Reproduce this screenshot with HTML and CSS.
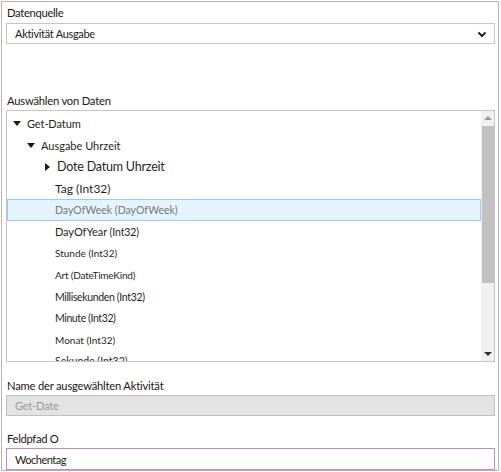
FILE: index.html
```html
<!DOCTYPE html>
<html lang="de">
<head>
<meta charset="utf-8">
<link rel="stylesheet" href="styles.css">
</head>
<body>
<div class="frame">
  <div class="label l1">Datenquelle</div>
  <div class="select">
    <span class="sel-text">Aktivität Ausgabe</span>
    <svg class="chev" width="10" height="7" viewBox="0 0 10 7"><polyline points="1.5,1.5 5,5 8.5,1.5" fill="none" stroke="#222" stroke-width="2"/></svg>
  </div>
  <div class="label l2">Auswählen von Daten</div>
  <div class="tree">
    <div class="list">
      <div class="row lv0"><span class="tri down"></span><span class="t i-get">Get-Datum</span></div>
      <div class="row lv1"><span class="tri down"></span><span class="t i-aus">Ausgabe Uhrzeit</span></div>
      <div class="row lv2"><span class="tri right"></span><span class="t i-dote">Dote Datum Uhrzeit</span></div>
      <div class="row lv3"><span class="t i-tag">Tag (Int32)</span></div>
      <div class="row lv3 sel"><span class="t i-dow">DayOfWeek (DayOfWeek)</span></div>
      <div class="row lv3"><span class="t i-doy">DayOfYear <span class="i-doy2">(Int32)</span></span></div>
      <div class="row lv3"><span class="t i-std">Stunde (Int32)</span></div>
      <div class="row lv3"><span class="t i-art">Art (DateTimeKind)</span></div>
      <div class="row lv3"><span class="t i-ms">Millisekunden (Int32)</span></div>
      <div class="row lv3"><span class="t i-min">Minute (Int32)</span></div>
      <div class="row lv3"><span class="t i-mon">Monat (Int32)</span></div>
      <div class="row lv3"><span class="t i-sek">Sekunde (Int32)</span></div>
    </div>
    <div class="sbar">
      <div class="arrow up"><span></span></div>
      <div class="thumb"></div>
      <div class="track"></div>
      <div class="arrow dn"><span></span></div>
    </div>
  </div>
  <div class="label l3">Name der ausgewählten Aktivität</div>
  <div class="input disabled">Get-Date</div>
  <div class="label l4">Feldpfad O</div>
  <div class="input focus">Wochentag</div>
</div>
</body>
</html>
```
FILE: styles.css
```css
* { box-sizing: border-box; }
html, body { margin: 0; padding: 0; background: #fff; }
body { font-family: Lato, "Noto Sans", sans-serif; color: #1e1e1e; }
.frame {
  margin: 1px;
  width: 498px;
  height: 470px;
  border: 1px solid #b4b4b4;
  padding: 3px 3px 0 4px;
  display: flex;
  flex-direction: column;
}
.label { font-size: 11.2px; line-height: 16px; height: 16px; padding-left: 1px; color: #1b1420; letter-spacing: -0.2px; }
.l1 { margin-top: 0; margin-bottom: 2px; letter-spacing: -0.3px; }
.l2 { margin-top: 49px; margin-bottom: 1px; }
.l3 { margin-top: 16px; margin-bottom: 1px; letter-spacing: -0.2px; }
.l4 { margin-top: 15px; margin-bottom: 1px; letter-spacing: -0.3px; }
.select {
  height: 21px;
  border: 1px solid #c6c6c6;
  display: flex;
  align-items: center;
  justify-content: space-between;
  padding: 0 7px 0 8px;
  font-size: 11px;
  letter-spacing: -0.3px;
  color: #1a1a1a;
}
.chev { display: block; margin-top: 1px; }
.tree {
  height: 252px;
  border: 1px solid #c6c6c6;
  display: flex;
  overflow: hidden;
}
.list { flex: 1; padding-top: 2px; overflow: hidden; }
.row {
  height: 21.6px;
  display: flex;
  align-items: center;
  white-space: nowrap;
  border: 1px solid transparent;
}
.row.lv0 { padding-left: 5px; }
.row.lv1 { padding-left: 19px; }
.row.lv2 { padding-left: 36px; }
.row.lv3 { padding-left: 47px; }
.row.sel { background: #e5f3ff; border-color: #99c8ff; }
.tri { width: 0; height: 0; margin-right: 6px; }
.tri.down { border-left: 4px solid transparent; border-right: 4px solid transparent; border-top: 5px solid #1a1a1a; }
.tri.right { border-top: 4px solid transparent; border-bottom: 4px solid transparent; border-left: 5px solid #1a1a1a; margin-right: 7px; margin-left: 1px; }
.t { color: #1f1f1f; }
.i-get { font-size: 11px; letter-spacing: -0.1px; }
.i-aus { font-size: 11px; letter-spacing: 0; }
.i-dote { font-size: 12.5px; letter-spacing: -0.2px; }
.i-tag { font-size: 12px; }
.i-dow { font-size: 10.5px; color: #777; }
.i-doy { font-size: 11px; letter-spacing: -0.1px; }
.i-doy2 { font-size: 10.5px; }
.i-std { font-size: 10px; letter-spacing: 0; }
.i-art { font-size: 10px; letter-spacing: -0.2px; }
.i-ms { font-size: 10.5px; letter-spacing: -0.35px; }
.i-min { font-size: 10.5px; letter-spacing: -0.4px; }
.i-mon { font-size: 10px; letter-spacing: 0; }
.i-sek { font-size: 10.5px; }
.sbar {
  width: 13px;
  display: flex;
  flex-direction: column;
  background: #f0f0f0;
}
.arrow { height: 14px; display: flex; align-items: center; justify-content: center; }
.arrow span { width: 0; height: 0; border-left: 4px solid transparent; border-right: 4px solid transparent; }
.arrow.up span { border-bottom: 4px solid #9a9a9a; }
.arrow.dn span { border-top: 4px solid #333; }
.thumb { height: 157px; background: #c1c1c1; margin: 1px 0 0 1px; }
.track { flex: 1; }
.input {
  height: 21px;
  border: 1px solid #c6c6c6;
  display: flex;
  align-items: center;
  padding-left: 8px;
  font-size: 11px;
}
.input.disabled { background: #e3e3e3; color: #9a9a9a; border-color: #c0c0c0; letter-spacing: -0.2px; }
.input.focus { height: 22px; border-color: #c08ac4; color: #1a1a1a; letter-spacing: -0.5px; }
```
